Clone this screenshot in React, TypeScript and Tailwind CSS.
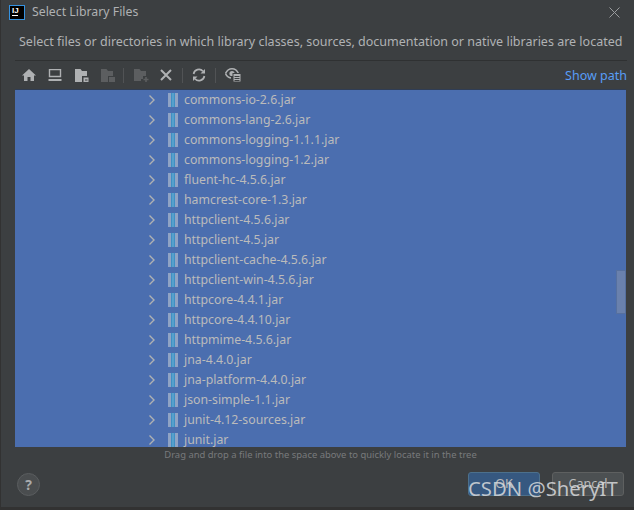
const files = [
  "commons-io-2.6.jar",
  "commons-lang-2.6.jar",
  "commons-logging-1.1.1.jar",
  "commons-logging-1.2.jar",
  "fluent-hc-4.5.6.jar",
  "hamcrest-core-1.3.jar",
  "httpclient-4.5.6.jar",
  "httpclient-4.5.jar",
  "httpclient-cache-4.5.6.jar",
  "httpclient-win-4.5.6.jar",
  "httpcore-4.4.1.jar",
  "httpcore-4.4.10.jar",
  "httpmime-4.5.6.jar",
  "jna-4.4.0.jar",
  "jna-platform-4.4.0.jar",
  "json-simple-1.1.jar",
  "junit-4.12-sources.jar",
  "junit.jar",
];

function JarIcon() {
  return (
    <svg width="10" height="14" viewBox="0 0 10 14" className="shrink-0">
      <rect x="0" y="0" width="3" height="14" fill="#8fa3c4" />
      <rect x="3" y="0" width="4" height="14" fill="#3f8fc4" />
      <rect x="7" y="0" width="3" height="14" fill="#8fa3c4" />
      <path d="M4 1h2M4 3h2M4 5h2M4 7h2M4 9h2M4 11h2M4 13h2" stroke="#6fb2d4" strokeWidth="1" />
    </svg>
  );
}

function Row({ name }: { name: string }) {
  return (
    <div className="flex h-5 shrink-0 items-center">
      <svg width="8" height="10" viewBox="0 0 8 10" className="ml-[133px] shrink-0">
        <path d="M1.5 0.5 6 5 1.5 9.5" fill="none" stroke="#afb1b3" strokeWidth="1.4" />
      </svg>
      <div className="ml-[12px]">
        <JarIcon />
      </div>
      <span className="ml-[6px] text-[12.3px] leading-5 text-[#bbbbbb]">{name}</span>
    </div>
  );
}

const on = "#afb1b3";
const off = "#5c5e60";

function Sep() {
  return <div className="h-[15px] w-px bg-[#515355]" />;
}

function Toolbar() {
  return (
    <div className="flex h-[28px] items-center">
      <svg width="14" height="12" viewBox="0 0 14 12" className="ml-[7px]">
        <path d="M7 0 14 6.5H12V12H8.5V8H5.5V12H2V6.5H0Z" fill={on} />
      </svg>
      <svg width="14" height="12" viewBox="0 0 14 12" className="ml-[12px]">
        <path d="M1.5 .5h11v7h-11z" fill="none" stroke={on} strokeWidth="1.4" />
        <rect x="0.5" y="10" width="13" height="2" fill={on} />
      </svg>
      <svg width="14" height="13" viewBox="0 0 14 13" className="ml-[13px]">
        <path d="M0 0H5.5L7 2H12V7H7V13H0Z" fill={on} />
        <rect x="8.5" y="8.5" width="5" height="4.5" fill={on} />
        <rect x="10" y="10.5" width="2.5" height="1" fill="#3c3f41" />
      </svg>
      <svg width="14" height="13" viewBox="0 0 14 13" className="ml-[12px]">
        <path d="M0 0H5.5L7 2H12V7H7V13H0Z" fill={off} />
        <rect x="8" y="8" width="6" height="5" fill={off} />
      </svg>
      <div className="ml-[8px]"><Sep /></div>
      <svg width="15" height="13" viewBox="0 0 15 13" className="ml-[10px]">
        <path d="M0 0H5.5L7 2H12V7H9V10H7V12H0Z" fill={off} />
        <path d="M12 8v5M9.5 10.5h5" stroke={off} strokeWidth="1.6" />
      </svg>
      <svg width="12" height="12" viewBox="0 0 12 12" className="ml-[11px]">
        <path d="M1 1 11 11M11 1 1 11" stroke={on} strokeWidth="2" />
      </svg>
      <div className="ml-[10px]"><Sep /></div>
      <svg width="14" height="14" viewBox="0 0 14 14" className="ml-[9px]">
        <path d="M1.6 6A5.4 5.4 0 0 1 11 3.3" fill="none" stroke={on} strokeWidth="1.7" />
        <path d="M12.4 8A5.4 5.4 0 0 1 3 10.7" fill="none" stroke={on} strokeWidth="1.7" />
        <path d="M8.5 5.5H13V1Z" fill={on} />
        <path d="M5.5 8.5H1V13Z" fill={on} />
      </svg>
      <div className="ml-[9px]"><Sep /></div>
      <svg width="16" height="14" viewBox="0 0 16 14" className="ml-[9px]">
        <path d="M.5 5.5C2 2.2 4.6.8 7 .8s5 1.4 6.5 4.7" fill="none" stroke={on} strokeWidth="1.5" />
        <path d="M.5 5.5C1.5 8 3.4 9.6 6 10" fill="none" stroke={on} strokeWidth="1.5" />
        <circle cx="7" cy="5.5" r="2.6" fill={on} />
        <rect x="8" y="5.5" width="8" height="8.5" fill={on} stroke="#3c3f41" />
        <path d="M9.5 8.5h5M9.5 10.5h5M9.5 12.5h5" stroke="#3c3f41" strokeWidth="1" />
      </svg>
      <a className="ml-auto mt-[2px] text-[12.5px] text-[#589df6]">Show path</a>
    </div>
  );
}

function App() {
  return (
    <div
      className="relative flex h-[510px] w-[634px] flex-col overflow-hidden border-l border-b-[3px] border-[#323232] bg-[#3c3f41] text-[#bbbbbb]"
      style={{ fontFamily: '"Noto Sans", "Open Sans", sans-serif' }}
    >
      <div className="flex h-[24px] shrink-0 items-center">
        <div className="ml-[8px] flex h-[15px] w-[16px] flex-col border border-[#3592e0] bg-black px-[2px]">
          <span className="text-[8px] font-bold leading-[9px] text-white" style={{ fontFamily: '"Liberation Sans", sans-serif' }}>IJ</span>
          <span className="h-px w-[6px] bg-white" />
        </div>
        <span className="ml-[7px] text-[12.3px] text-[#afb1b3]">Select Library Files</span>
        <svg width="11" height="11" viewBox="0 0 11 11" className="ml-auto mr-[14px]">
          <path d="M.5.5 10.5 10.5M10.5.5.5 10.5" stroke="#9a9c9e" strokeWidth="1" />
        </svg>
      </div>
      <div className="mt-[8px] h-[20px] shrink-0 pl-[18px] text-[12.5px] leading-5 text-[#b0b2b4]">
        Select files or directories in which library classes, sources, documentation or native libraries are located
      </div>
      <div className="ml-[14px] mr-[7px] mt-[8px] shrink-0 border-t border-[#2f3132]">
        <Toolbar />
      </div>
      <div className="relative ml-[14px] mr-[8px] h-[358px] shrink-0 overflow-hidden border-t border-[#2f3d55] bg-[#4b6eaf]">
        <div className="flex flex-col">
          {files.map((f) => (
            <Row key={f} name={f} />
          ))}
        </div>
        <div className="absolute right-0 top-[180px] h-[44px] w-[10px] border border-[#56709f] bg-[#6a81ad]" />
      </div>
      <div className="mt-px h-[14px] shrink-0 pl-[6px] text-center text-[9.45px] leading-[14px] text-[#787a7c]">
        Drag and drop a file into the space above to quickly locate it in the tree
      </div>
      <div className="mt-[10px] flex h-[24px] shrink-0 items-center pl-[16px] pr-[10px]">
        <div className="flex h-[23px] w-[23px] items-center justify-center rounded-full border border-[#5a5d5f] bg-[#4a4d4f] text-[14px] font-bold text-[#a9abad]">?</div>
        <div className="ml-auto flex h-[24px] w-[72px] items-center justify-center rounded-[3px] border border-[#4c708c] bg-[#365880] text-[12.5px] text-[#bbbbbb]">OK</div>
        <div className="ml-[12px] flex h-[24px] w-[72px] items-center justify-center rounded-[3px] border border-[#5e6060] bg-[#4c5052] text-[12.5px] text-[#bbbbbb]">Cancel</div>
      </div>
      <div
        className="absolute left-[467px] top-[476px] text-[20.3px] leading-6 text-[#d8dadc]/85"
        style={{ fontFamily: '"Noto Sans", sans-serif' }}
      >
        CSDN @SheryIT
      </div>
    </div>
  );
}

export default App;
